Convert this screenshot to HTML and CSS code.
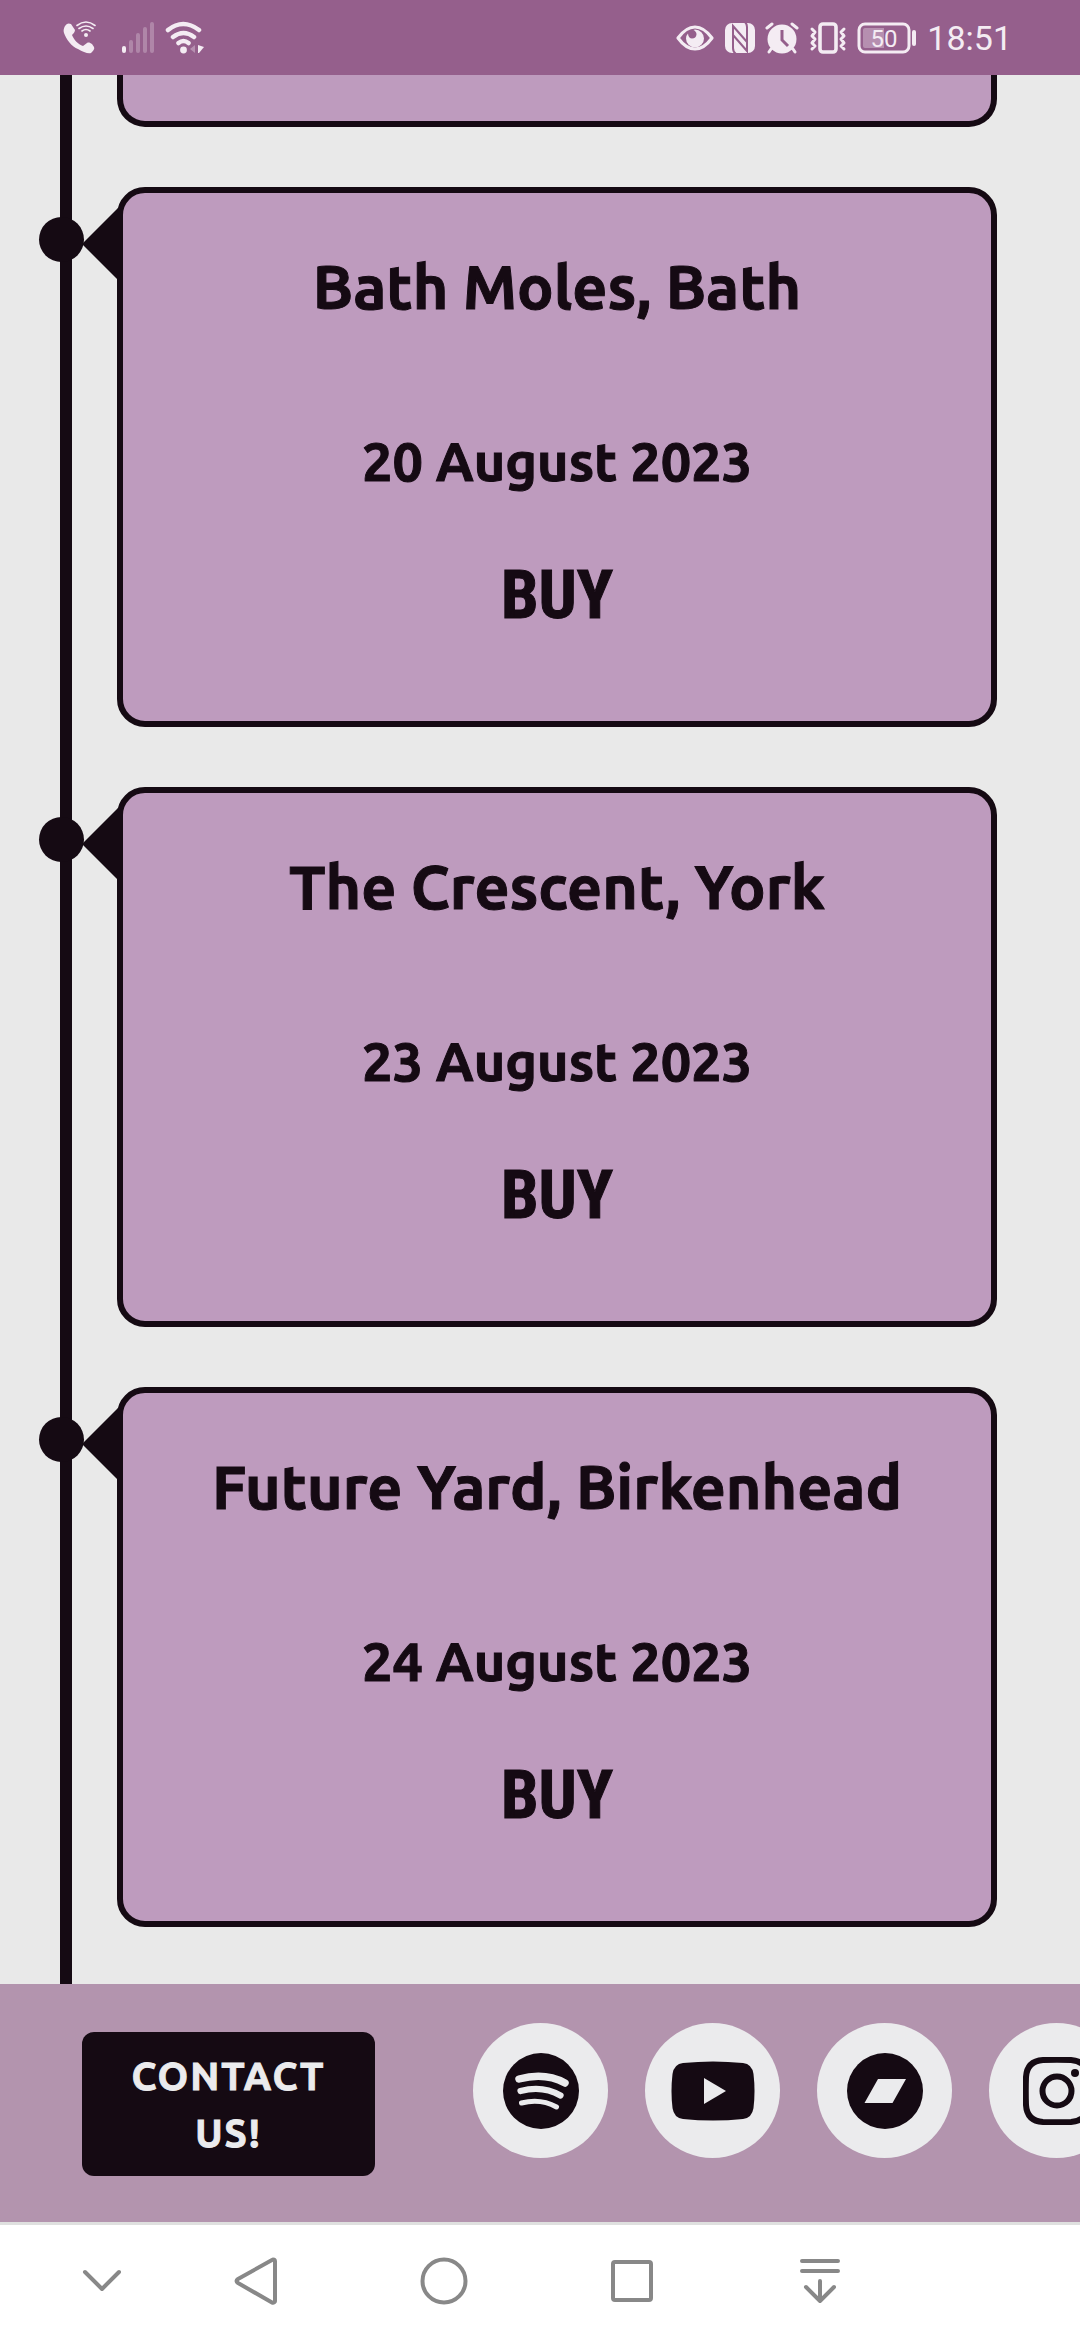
FILE: index.html
```html
<!DOCTYPE html>
<html lang="en">
<head>
<meta charset="utf-8">
<meta name="viewport" content="width=device-width, initial-scale=1">
<title>Tour dates</title>
<link rel="stylesheet" href="styles.css">
</head>
<body>
<header class="status">
  <div class="status-left">
    <svg class="call" width="34" height="34" viewBox="0 0 34 34" aria-label="Wi-Fi calling">
      <path fill="currentColor" d="M2 5C4 2 6 2 8 3l4 6c0 2-2 4-3 5 2 5 6 9 11 11l4-3c2-1 3 0 5 1l2 3c1 2-1 4-3 6-3 1-8-1-13-4C9 26 3 18 1 12 0 9 1 7 2 5z"/>
      <circle cx="23" cy="14" r="2" fill="currentColor"/>
      <g fill="none" stroke="currentColor" stroke-width="1.6" stroke-linecap="round"><path d="M19 10q4-3 8 0M16 7.500q7-5 14 0M14 4.500q9-7 18 0"/></g>
    </svg>
    <svg class="signal" width="34" height="34" viewBox="0 0 34 34" aria-label="Signal">
      <g stroke="currentColor" stroke-width="4" stroke-linecap="round"><path d="M3 27v3"/><path opacity=".28" d="M10 21v9M17 14v16M24 8v22M31 3v27"/></g>
    </svg>
    <svg width="40" height="34" viewBox="0 0 40 34" aria-label="Wi-Fi">
      <g fill="none" stroke="currentColor" stroke-width="4.500" stroke-linecap="round"><path d="M3 9q15-12 31 0M8 16q10.500-8 21 0M13.500 22q5-4 10 0"/></g>
      <circle cx="18.500" cy="29" r="3.400" fill="currentColor"/>
      <path fill="currentColor" opacity=".35" d="M30 24v8l-5-4z"/><path fill="currentColor" d="M33 24v8h1l5-6-3-1z"/>
    </svg>
  </div>
  <div class="status-right">
    <svg width="38" height="34" viewBox="0 0 38 34" aria-label="Eye comfort">
      <path fill="none" stroke="currentColor" stroke-width="3.200" stroke-linejoin="round" d="M2 17Q10 6 19 6t17 11Q28 28 19 28T2 17z"/>
      <path fill="currentColor" d="M19 8.500a9 9 0 1 1-9 9q0-3 2-5c0 3 2 5 4 5q4 0 4.500-4 0-3-3-4.500z"/>
    </svg>
    <svg width="31" height="34" viewBox="0 0 31 34" aria-label="NFC">
      <rect x="1" y="2" width="30" height="30" rx="7" fill="currentColor"/>
      <path fill="none" stroke="#955f8c" stroke-width="2" d="M12 33q-3-2-3-6V5l14 16M21 1q2 2 2 5v24L9 14"/>
    </svg>
    <svg width="34" height="34" viewBox="0 0 34 34" aria-label="Alarm">
      <circle cx="17" cy="18" r="14.500" fill="currentColor"/>
      <path fill="none" stroke="currentColor" stroke-width="3" stroke-linecap="round" d="M2 7l5-4M27 3l5 4M6 28l-2 3M28 28l2 3"/>
      <path fill="none" stroke="#955f8c" stroke-width="3" d="M17 9v10l6 6"/>
    </svg>
    <svg width="38" height="34" viewBox="0 0 38 34" aria-label="Vibrate">
      <rect x="11" y="3" width="16" height="28" rx="3" fill="none" stroke="currentColor" stroke-width="3.600"/>
      <path fill="none" stroke="currentColor" stroke-width="3" stroke-linecap="round" stroke-linejoin="round" d="M3 8l3 3-3 4 3 3-3 4 3 3-3 3M35 8l-3 3 3 4-3 3 3 4-3 3 3 3"/>
    </svg>
    <svg width="60" height="34" viewBox="0 0 60 34" aria-label="Battery">
      <rect x="2" y="3" width="50" height="28" rx="6" fill="none" stroke="currentColor" stroke-width="3"/>
      <path fill="currentColor" opacity=".35" d="M8 7h19v20H8q-2 0-2-2V9q0-2 2-2z"/>
      <path stroke="currentColor" stroke-width="4" stroke-linecap="round" d="M57 11v12"/>
      <text class="charge" x="27" y="26" text-anchor="middle">50</text>
    </svg>
    <time class="clock">18:51</time>
  </div>
</header>

<main class="page">
  <ol class="timeline">
    <li class="card card-passed"></li>
    <li class="card stop">
      <h2 class="venue">Bath Moles, Bath</h2>
      <time class="date">20 August 2023</time>
      <a class="buy" href="#">BUY</a>
    </li>
    <li class="card stop">
      <h2 class="venue">The Crescent, York</h2>
      <time class="date">23 August 2023</time>
      <a class="buy" href="#">BUY</a>
    </li>
    <li class="card stop">
      <h2 class="venue">Future Yard, Birkenhead</h2>
      <time class="date">24 August 2023</time>
      <a class="buy" href="#">BUY</a>
    </li>
  </ol>
</main>

<footer class="footer">
  <button class="contact" type="button">CONTACT US!</button>
  <div class="social">
    <a class="round" href="#" aria-label="Spotify">
      <svg width="76" height="76" viewBox="0 0 76 76"><circle cx="38" cy="38" r="38" fill="currentColor"/>
      <g fill="none" stroke="#ebebed" stroke-linecap="round"><path stroke-width="7.500" d="M16 26q26-7 46 4"/><path stroke-width="6.200" d="M17.500 38q22-6 40 4.500"/><path stroke-width="5" d="M18.500 50q19-5 35 4"/></g></svg>
    </a>
    <a class="round" href="#" aria-label="YouTube">
      <svg width="84" height="60" viewBox="0 0 84 60"><path fill="currentColor" d="M12 2Q42-1 72 2q9 1 10.500 11 2 17 0 34Q81 57 72 58q-30 3-60 0Q3 57 1.500 47q-2-17 0-34Q3 3 12 2z"/><path fill="#ebebed" d="M33 17l22 13-22 13z"/></svg>
    </a>
    <a class="round" href="#" aria-label="Bandcamp">
      <svg width="76" height="76" viewBox="0 0 76 76"><circle cx="38" cy="38" r="38" fill="currentColor"/><path fill="#ebebed" d="M31 26h28L45.500 50H17.500z"/></svg>
    </a>
    <a class="round" href="#" aria-label="Instagram">
      <svg width="68" height="68" viewBox="0 0 68 68"><g fill="none" stroke="currentColor" stroke-width="6"><path d="M20 3Q34 2.500 48 3q16 1 17 17 .5 14 0 28-1 16-17 17-14 .5-28 0Q4 64 3 48q-.5-14 0-28Q4 4 20 3z"/><circle cx="34" cy="34" r="14.500"/></g><circle cx="52" cy="16" r="4" fill="currentColor"/></svg>
    </a>
  </div>
</footer>

<nav class="system" aria-label="System navigation">
  <button class="key key-hide" type="button" aria-label="Hide"><svg width="48" height="48" viewBox="0 0 48 48"><path d="M7 15l17 17 17-17"/></svg></button>
  <button class="key" type="button" aria-label="Back"><svg width="48" height="48" viewBox="0 0 48 48"><path d="M41 2.500a2 2 0 0 1 2 2v39a2 2 0 0 1-3 2L6 26q-3-2 0-4L40 3z"/></svg></button>
  <button class="key" type="button" aria-label="Home"><svg width="48" height="48" viewBox="0 0 48 48"><circle cx="24" cy="24" r="21.500"/></svg></button>
  <button class="key" type="button" aria-label="Recent"><svg width="48" height="48" viewBox="0 0 48 48"><rect x="5" y="5" width="38" height="38" rx="2"/></svg></button>
  <button class="key" type="button" aria-label="Notifications"><svg width="48" height="48" viewBox="0 0 48 48"><path d="M6 4h36M6 14h36M24 24v20M10 30l14 14 14-14"/></svg></button>
</nav>
</body>
</html>
```
FILE: styles.css
```css
:root {
  --ink: #150a13;
  --paper: #e9e9e9;
  --card: #be9bbe;
  --chip: #ebebed;
}

* { box-sizing: border-box; }

body {
  margin: 0;
  min-height: 100vh;
  display: flex;
  flex-direction: column;
  overflow-x: hidden;
  background: var(--paper);
  color: var(--ink);
  font-family: Ubuntu, "Noto Sans", sans-serif;
}

svg { display: block; flex: none; }

button {
  border: 0;
  font: inherit;
  cursor: pointer;
}

/* Status bar */
.status {
  display: flex;
  justify-content: space-between;
  height: 75px;
  padding: 0 68px 0 63px;
  background: #955f8c;
  color: #f4ecf3;
}

.status-left,
.status-right {
  display: flex;
  align-items: center;
  gap: 10px;
}

.signal { margin-left: 14px; }

.charge {
  fill: currentColor;
  font: 24px Roboto, sans-serif;
}

.clock {
  font: 34px/40px Roboto, sans-serif;
}

/* Timeline */
.page { flex: 1; }

.timeline {
  display: flex;
  flex-direction: column;
  gap: 60px;
  min-height: 100%;
  margin: 0 0 0 60px;
  padding: 0 83px 57px 45px;
  border-left: 12px solid var(--ink);
  list-style: none;
}

.card {
  position: relative;
  display: flex;
  flex-direction: column;
  align-items: center;
  padding: 54px 24px 86px;
  border: 6px solid var(--ink);
  border-radius: 28px;
  background: var(--card);
  font-weight: 700;
  line-height: 80px;
  text-align: center;
}

.card-passed {
  padding: 46px 0 0;
  border-top: 0;
  border-radius: 0 0 28px 28px;
}

.stop::before,
.stop::after {
  content: "";
  position: absolute;
  background: var(--ink);
}

.stop::before {
  top: 24px;
  left: -84px;
  width: 45px;
  height: 45px;
  border-radius: 50%;
}

.stop::after {
  top: 15px;
  left: -41px;
  width: 36px;
  height: 72px;
  clip-path: polygon(100% 0, 0 50%, 100% 100%);
}

.venue,
.date,
.contact {
  -webkit-text-stroke: 1px currentColor;
}

.venue {
  margin: 0 0 94px;
  font-size: 61px;
  font-weight: 700;
}

.date {
  margin-bottom: 54px;
  font-size: 54px;
}

.buy {
  color: inherit;
  font-family: "Liberation Sans Narrow", "Roboto Condensed", Roboto, sans-serif;
  font-size: 67px;
  text-decoration: none;
  -webkit-text-stroke: 1px currentColor;
}

/* Footer */
.footer {
  display: flex;
  align-items: flex-start;
  gap: 98px;
  padding: 39px 0 46px 82px;
  overflow: hidden;
  background: #b394ae;
}

.contact {
  flex: 0 0 293px;
  margin-top: 9px;
  padding: 15px 40px;
  border-radius: 12px;
  background: var(--ink);
  color: var(--chip);
  font-size: 39px;
  font-weight: 700;
  line-height: 57px;
  letter-spacing: 2px;
}

.social {
  display: flex;
  gap: 37px;
}

.round {
  display: flex;
  flex: none;
  align-items: center;
  justify-content: center;
  width: 135px;
  height: 135px;
  border-radius: 50%;
  background: var(--chip);
  color: var(--ink);
}

/* System navigation */
.system {
  display: flex;
  padding-left: 42px;
  border-top: 3px solid #dfe0df;
  background: #fff;
}

.key {
  display: flex;
  flex: none;
  align-items: center;
  justify-content: center;
  width: 188px;
  height: 115px;
  padding: 0 0 4px;
  background: none;
}

.key-hide { width: 120px; }

.key svg {
  fill: none;
  stroke: #888;
  stroke-width: 4;
  stroke-linecap: round;
  stroke-linejoin: round;
}
```
